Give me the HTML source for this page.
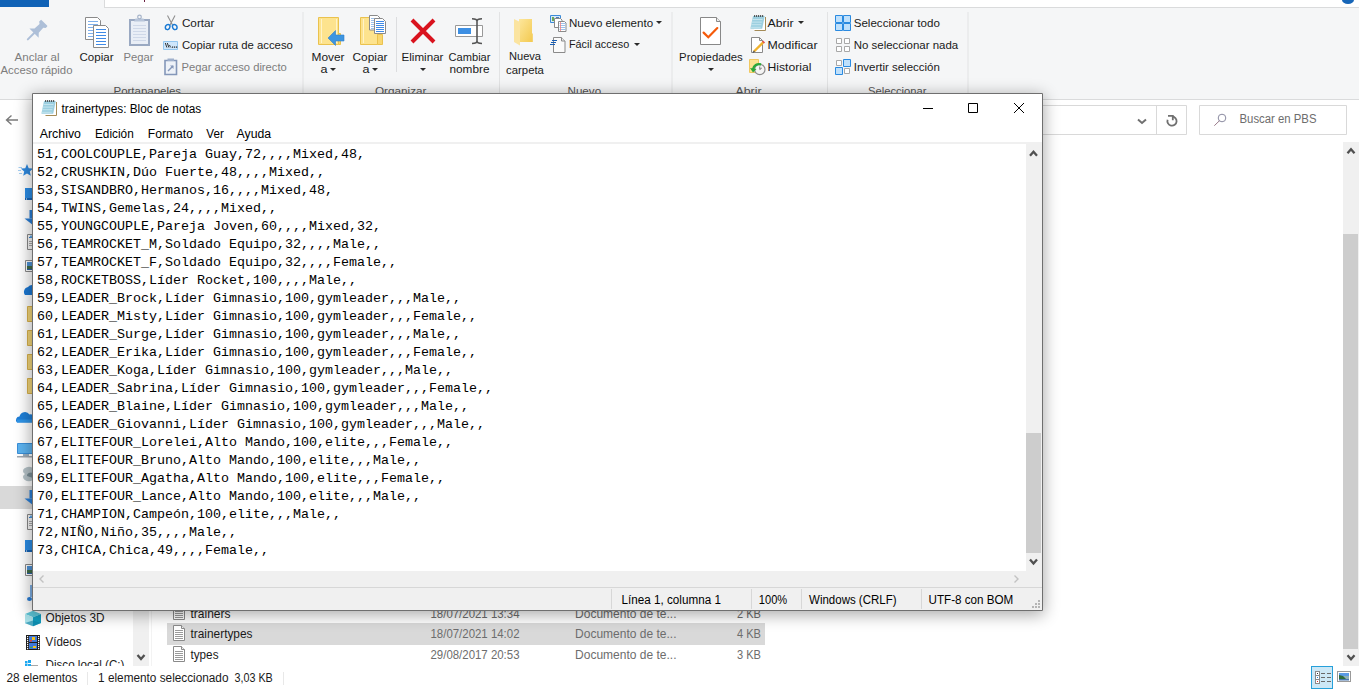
<!DOCTYPE html><html><head><meta charset="utf-8"><style>html,body{margin:0;padding:0;overflow:hidden;background:#fff}</style></head><body><svg width="1359" height="689" viewBox="0 0 1359 689" style="display:block">
<defs><filter id="sh" x="-20%" y="-20%" width="140%" height="140%"><feGaussianBlur stdDeviation="8"/></filter></defs>
<rect x="0" y="0" width="1359" height="689" fill="#ffffff" />
<rect x="0" y="0" width="1359" height="100" fill="#f5f6f7" />
<rect x="0" y="0" width="49" height="7" fill="#1062b6" />
<rect x="104" y="0" width="1255" height="7" fill="#ffffff" />
<line x1="104.5" y1="0" x2="104.5" y2="7.5" stroke="#dadbdc" stroke-width="1" />
<line x1="104" y1="7.5" x2="1359" y2="7.5" stroke="#dadbdc" stroke-width="1" />
<rect x="144" y="0" width="1" height="2" fill="#6a2040" />
<path d="M1342 0 A6 4 0 0 0 1354 0 Z" fill="#1766b8" stroke="none" stroke-width="1" />
<line x1="0" y1="99.5" x2="1359" y2="99.5" stroke="#dadbdc" stroke-width="1" />
<line x1="303" y1="12" x2="303" y2="96" stroke="#e2e3e4" stroke-width="1" />
<line x1="499.5" y1="12" x2="499.5" y2="96" stroke="#e2e3e4" stroke-width="1" />
<line x1="672" y1="12" x2="672" y2="96" stroke="#e2e3e4" stroke-width="1" />
<line x1="827.5" y1="12" x2="827.5" y2="96" stroke="#e2e3e4" stroke-width="1" />
<line x1="968" y1="12" x2="968" y2="96" stroke="#e2e3e4" stroke-width="1" />
<g transform="translate(35.6 31.6) rotate(45)" fill="#adbfd8"><rect x="-1" y="1" width="2" height="11" rx="1"/><path d="M-6.5 2.2 L6.5 2.2 L3 -1.5 L2.6 -8.2 L4.6 -9.6 L4.6 -11.6 Q4.6 -12.4 3.8 -12.4 L-3.8 -12.4 Q-4.6 -12.4 -4.6 -11.6 L-4.6 -9.6 L-2.6 -8.2 L-3 -1.5 Z"/></g>
<text x="14.5" y="60.7" font-family="Liberation Sans" font-size="11" fill="#7d7d7d" textLength="45.0" lengthAdjust="spacingAndGlyphs" >Anclar al</text>
<text x="0.5" y="73.6" font-family="Liberation Sans" font-size="11" fill="#7d7d7d" textLength="72.0" lengthAdjust="spacingAndGlyphs" >Acceso rápido</text>
<path d="M85.5 17.5 h12 l3 3 v19 h-15 z" fill="#fff" stroke="#8a8a8a" stroke-width="1" />
<line x1="88" y1="21.5" x2="98" y2="21.5" stroke="#7fb0ec" stroke-width="1" />
<line x1="88" y1="24.5" x2="98" y2="24.5" stroke="#7fb0ec" stroke-width="1" />
<line x1="88" y1="27.5" x2="98" y2="27.5" stroke="#7fb0ec" stroke-width="1" />
<line x1="88" y1="30.5" x2="98" y2="30.5" stroke="#7fb0ec" stroke-width="1" />
<line x1="88" y1="33.5" x2="98" y2="33.5" stroke="#7fb0ec" stroke-width="1" />
<line x1="88" y1="36.5" x2="98" y2="36.5" stroke="#7fb0ec" stroke-width="1" />
<path d="M93.5 25.5 h12 l3 3 v19 h-15 z" fill="#fff" stroke="#8a8a8a" stroke-width="1" />
<line x1="96" y1="29.5" x2="106" y2="29.5" stroke="#3f8ae6" stroke-width="1" />
<line x1="96" y1="32.5" x2="106" y2="32.5" stroke="#3f8ae6" stroke-width="1" />
<line x1="96" y1="35.5" x2="106" y2="35.5" stroke="#3f8ae6" stroke-width="1" />
<line x1="96" y1="38.5" x2="106" y2="38.5" stroke="#3f8ae6" stroke-width="1" />
<line x1="96" y1="41.5" x2="106" y2="41.5" stroke="#3f8ae6" stroke-width="1" />
<line x1="96" y1="44.5" x2="106" y2="44.5" stroke="#3f8ae6" stroke-width="1" />
<text x="79.5" y="60.7" font-family="Liberation Sans" font-size="11" fill="#1a1a1a" textLength="34.0" lengthAdjust="spacingAndGlyphs" >Copiar</text>
<path d="M130 20 h19 v25 h-19 z" fill="#e9eef6" stroke="#9aa9c2" stroke-width="2" />
<path d="M134 21.5 h11 l-1.5 -3 h-8 z" fill="#b8c5da" stroke="none" stroke-width="1" />
<circle cx="139.5" cy="17" r="1.8" fill="none" stroke="#a5b3c9" stroke-width="1.2"/>
<line x1="133" y1="25.5" x2="146" y2="25.5" stroke="#cfd8e8" stroke-width="1" />
<line x1="133" y1="28.5" x2="146" y2="28.5" stroke="#cfd8e8" stroke-width="1" />
<line x1="133" y1="31.5" x2="146" y2="31.5" stroke="#cfd8e8" stroke-width="1" />
<line x1="133" y1="34.5" x2="146" y2="34.5" stroke="#cfd8e8" stroke-width="1" />
<line x1="133" y1="37.5" x2="146" y2="37.5" stroke="#cfd8e8" stroke-width="1" />
<line x1="133" y1="40.5" x2="146" y2="40.5" stroke="#cfd8e8" stroke-width="1" />
<text x="123.5" y="60.7" font-family="Liberation Sans" font-size="11" fill="#7d7d7d" textLength="30.0" lengthAdjust="spacingAndGlyphs" >Pegar</text>
<path d="M167.5 15.5 L172.5 25 M175 15.5 L170 25" fill="none" stroke="#8f8f8f" stroke-width="1.1" />
<path d="M169.8 25.2 C168 23.5 165 25 165.3 27.8 C165.6 30.2 168.8 30.2 169.6 28 C170 27 170.2 26 169.8 25.2 Z" fill="none" stroke="#1a7ad4" stroke-width="1.5" />
<path d="M172.6 25.2 C174.4 23.5 177.4 25 177.1 27.8 C176.8 30.2 173.6 30.2 172.8 28 C172.4 27 172.2 26 172.6 25.2 Z" fill="none" stroke="#1a7ad4" stroke-width="1.5" />
<text x="181.9" y="27.1" font-family="Liberation Sans" font-size="11" fill="#1a1a1a" textLength="32.6" lengthAdjust="spacingAndGlyphs" >Cortar</text>
<path d="M163.5 41.5 h14 v8 h-14 z" fill="#cfe6fb" stroke="#93c6f0" stroke-width="1" />
<path d="M165.3 43 l1.6 4.5 M167.3 43 l1.6 4.5" fill="none" stroke="#222" stroke-width="0.9" />
<path d="M169.5 45 q1 2.5 1.5 2.5" fill="none" stroke="#222" stroke-width="0.9" />
<rect x="172" y="46.5" width="1.2" height="1.2" fill="#222" />
<rect x="174" y="46.5" width="1.2" height="1.2" fill="#222" />
<rect x="176" y="46.5" width="1.2" height="1.2" fill="#222" />
<text x="181.9" y="49.2" font-family="Liberation Sans" font-size="11" fill="#1a1a1a" textLength="111.0" lengthAdjust="spacingAndGlyphs" >Copiar ruta de acceso</text>
<path d="M165 60.5 h11.5 v14 h-11.5 z" fill="#eef2f8" stroke="#8497b9" stroke-width="1.6" />
<rect x="167.5" y="58.5" width="6.5" height="2.5" fill="#9fb0cc" />
<path d="M168 71 l5 -5" fill="none" stroke="#8497b9" stroke-width="1.4" />
<path d="M170 65.5 h3.5 v3.5 z" fill="#8497b9" stroke="none" stroke-width="1" />
<text x="181.5" y="70.7" font-family="Liberation Sans" font-size="11" fill="#7d7d7d" textLength="105.3" lengthAdjust="spacingAndGlyphs" >Pegar acceso directo</text>
<text x="113.5" y="94.5" font-family="Liberation Sans" font-size="11" fill="#555" textLength="67.6" lengthAdjust="spacingAndGlyphs" >Portapapeles</text>
<path d="M318.5 17.5 h20 v27 h-20 z" fill="#fde38e" stroke="#eac24e" stroke-width="1" />
<line x1="321.5" y1="19" x2="321.5" y2="43" stroke="#fff3c8" stroke-width="1" />
<line x1="336.5" y1="19" x2="336.5" y2="43" stroke="#fff3c8" stroke-width="1" />
<path d="M338.5 33.5 h2 v11 h-2 z" fill="#f9d771" stroke="#eac24e" stroke-width="1" />
<path d="M328 38 l7.5 -7.5 v4.5 h8.5 v6 h-8.5 v4.5 z" fill="#3d95e0" stroke="#2f7fcc" stroke-width="0.6" />
<text x="311.5" y="60.8" font-family="Liberation Sans" font-size="11" fill="#1a1a1a" textLength="33.0" lengthAdjust="spacingAndGlyphs" >Mover</text>
<text x="320.5" y="73" font-family="Liberation Sans" font-size="11" fill="#1a1a1a" textLength="7.0" lengthAdjust="spacingAndGlyphs" >a</text>
<path d="M330 68 h6 l-3.0 3.0 z" fill="#2a2a2a" stroke="none" stroke-width="1" />
<path d="M360.5 17.5 h17 v27 h-17 z" fill="#fde38e" stroke="#eac24e" stroke-width="1" />
<line x1="363.5" y1="19" x2="363.5" y2="43" stroke="#fff3c8" stroke-width="1" />
<path d="M377.5 34.5 h5 v10 h-5 z" fill="#f9d771" stroke="#eac24e" stroke-width="1" />
<path d="M369.5 15.5 h8 l2.5 2.5 v12 h-10.5 z" fill="#fff" stroke="#8a8a8a" stroke-width="1" />
<line x1="371" y1="18.5" x2="375" y2="18.5" stroke="#9cc0ea" stroke-width="1" />
<line x1="371" y1="20.5" x2="375" y2="20.5" stroke="#9cc0ea" stroke-width="1" />
<line x1="371" y1="22.5" x2="375" y2="22.5" stroke="#9cc0ea" stroke-width="1" />
<line x1="371" y1="24.5" x2="375" y2="24.5" stroke="#9cc0ea" stroke-width="1" />
<line x1="371" y1="26.5" x2="375" y2="26.5" stroke="#9cc0ea" stroke-width="1" />
<line x1="371" y1="28.5" x2="375" y2="28.5" stroke="#9cc0ea" stroke-width="1" />
<path d="M374.5 18.5 h8 l3 3 v12 h-11 z" fill="#fff" stroke="#8a8a8a" stroke-width="1" />
<line x1="376" y1="21.5" x2="384" y2="21.5" stroke="#3f8ae6" stroke-width="1" />
<line x1="376" y1="23.5" x2="384" y2="23.5" stroke="#3f8ae6" stroke-width="1" />
<line x1="376" y1="25.5" x2="384" y2="25.5" stroke="#3f8ae6" stroke-width="1" />
<line x1="376" y1="27.5" x2="384" y2="27.5" stroke="#3f8ae6" stroke-width="1" />
<line x1="376" y1="29.5" x2="384" y2="29.5" stroke="#3f8ae6" stroke-width="1" />
<line x1="376" y1="31.5" x2="384" y2="31.5" stroke="#3f8ae6" stroke-width="1" />
<text x="352.5" y="60.8" font-family="Liberation Sans" font-size="11" fill="#1a1a1a" textLength="35.0" lengthAdjust="spacingAndGlyphs" >Copiar</text>
<text x="362.5" y="73" font-family="Liberation Sans" font-size="11" fill="#1a1a1a" textLength="7.0" lengthAdjust="spacingAndGlyphs" >a</text>
<path d="M372 68 h6 l-3.0 3.0 z" fill="#2a2a2a" stroke="none" stroke-width="1" />
<line x1="396.5" y1="17" x2="396.5" y2="72" stroke="#dcdddf" stroke-width="1" />
<path d="M412 20 L434 42 M434 20 L412 42" fill="none" stroke="#d9131e" stroke-width="4" />
<text x="401.5" y="60.8" font-family="Liberation Sans" font-size="11" fill="#1a1a1a" textLength="42.0" lengthAdjust="spacingAndGlyphs" >Eliminar</text>
<path d="M420 68 h6 l-3.0 3.0 z" fill="#2a2a2a" stroke="none" stroke-width="1" />
<path d="M455.5 25.5 h27 v11 h-27 z" fill="#fff" stroke="#999" stroke-width="1" />
<rect x="458" y="28" width="13" height="6" fill="#3d8fe3" />
<path d="M472 18.8 q5 0 5 2.5 q0 -2.5 5 -2.5 M477 21 v20.5 M472 43.5 q5 0 5 -2.5 q0 2.5 5 2.5" fill="none" stroke="#555" stroke-width="1.6" />
<text x="448.5" y="60.8" font-family="Liberation Sans" font-size="11" fill="#1a1a1a" textLength="42.0" lengthAdjust="spacingAndGlyphs" >Cambiar</text>
<text x="449.5" y="73" font-family="Liberation Sans" font-size="11" fill="#1a1a1a" textLength="40.0" lengthAdjust="spacingAndGlyphs" >nombre</text>
<text x="375.0" y="94.5" font-family="Liberation Sans" font-size="11" fill="#555" textLength="51.5" lengthAdjust="spacingAndGlyphs" >Organizar</text>
<defs><linearGradient id="fg" x1="0" y1="0" x2="1" y2="1"><stop offset="0" stop-color="#fde79c"/><stop offset="1" stop-color="#f3c94f"/></linearGradient></defs>
<path d="M519 19 h13 v14 l0.8 1 v8 h-13.8 z" fill="url(#fg)" stroke="none" stroke-width="1" />
<path d="M514 19 l6 3 v23.5 l-6 -3.5 z" fill="#fbe4a0" stroke="none" stroke-width="1" />
<text x="509.0" y="60.3" font-family="Liberation Sans" font-size="11" fill="#1a1a1a" textLength="32.0" lengthAdjust="spacingAndGlyphs" >Nueva</text>
<text x="506.1" y="73.6" font-family="Liberation Sans" font-size="11" fill="#1a1a1a" textLength="37.8" lengthAdjust="spacingAndGlyphs" >carpeta</text>
<path d="M550.5 15.5 h10 v7 h-10 z" fill="#d6e9f8" stroke="#3a8ad8" stroke-width="1" />
<rect x="552" y="17" width="2" height="4" fill="#6aa85a" />
<rect x="556" y="17" width="3" height="2" fill="#4a7ab8" />
<path d="M554.5 18.5 h6 l1.5 1.5 v7.5 h-7.5 z" fill="#fff" stroke="#8a8a8a" stroke-width="1" />
<path d="M558.5 21.5 h6 l1.5 1.5 v8.5 h-7.5 z" fill="#fff" stroke="#8a8a8a" stroke-width="1" />
<line x1="559.5" y1="23.5" x2="565.5" y2="23.5" stroke="#9cc0ea" stroke-width="1" />
<line x1="559.5" y1="25.5" x2="565.5" y2="25.5" stroke="#9cc0ea" stroke-width="1" />
<line x1="559.5" y1="27.5" x2="565.5" y2="27.5" stroke="#9cc0ea" stroke-width="1" />
<line x1="559.5" y1="29.5" x2="565.5" y2="29.5" stroke="#9cc0ea" stroke-width="1" />
<line x1="560.5" y1="22" x2="560.5" y2="31" stroke="#f08080" stroke-width="0.8" />
<text x="568.9" y="26.5" font-family="Liberation Sans" font-size="11" fill="#1a1a1a" textLength="84.2" lengthAdjust="spacingAndGlyphs" >Nuevo elemento</text>
<path d="M656 21 h6 l-3.0 3.0 z" fill="#2a2a2a" stroke="none" stroke-width="1" />
<path d="M553.5 37.5 h8 l3.5 3.5 v11.5 h-11.5 z" fill="#fafafa" stroke="#8a8a8a" stroke-width="1" />
<path d="M561.5 37.5 v3.5 h3.5" fill="#e8e8e8" stroke="#8a8a8a" stroke-width="1" />
<path d="M552 40.5 h5 M551 42.5 h5 M550 44.5 h5" fill="none" stroke="#1a5fb4" stroke-width="1" />
<text x="568.9" y="48.4" font-family="Liberation Sans" font-size="11" fill="#1a1a1a" textLength="60.3" lengthAdjust="spacingAndGlyphs" >Fácil acceso</text>
<path d="M634 43 h6 l-3.0 3.0 z" fill="#2a2a2a" stroke="none" stroke-width="1" />
<text x="567.5" y="94.5" font-family="Liberation Sans" font-size="11" fill="#555" textLength="33.6" lengthAdjust="spacingAndGlyphs" >Nuevo</text>
<path d="M700.5 17.5 h16 l4 4 v23 h-20 z" fill="#fff" stroke="#888" stroke-width="1" />
<path d="M716.5 17.5 v4 h4" fill="#eeeeee" stroke="#888" stroke-width="1" />
<path d="M703.6 32.6 l4.7 4.7 l9 -9.2" fill="none" stroke="#f55a0a" stroke-width="2.2" stroke-linecap="round"/>
<text x="679.1" y="60.9" font-family="Liberation Sans" font-size="11" fill="#1a1a1a" textLength="63.7" lengthAdjust="spacingAndGlyphs" >Propiedades</text>
<path d="M708 68 h6 l-3.0 3.0 z" fill="#2a2a2a" stroke="none" stroke-width="1" />
<path d="M754 16 h11 v15 h-11 z" fill="#ffffff" stroke="none" stroke-width="1" />
<path d="M765.5 17 v13.5 h-11" fill="none" stroke="#a48b57" stroke-width="1" />
<path d="M753 16 h11.8 l-2.6 12.8 h-11.8 z" fill="#9ccfe0" stroke="none" stroke-width="1" />
<line x1="752.5" y1="19.5" x2="762.5" y2="19.5" stroke="#c4e4ee" stroke-width="1" />
<line x1="751.9" y1="22.1" x2="761.9" y2="22.1" stroke="#c4e4ee" stroke-width="1" />
<line x1="751.3" y1="24.7" x2="761.3" y2="24.7" stroke="#c4e4ee" stroke-width="1" />
<line x1="750.7" y1="27.3" x2="760.7" y2="27.3" stroke="#c4e4ee" stroke-width="1" />
<rect x="754" y="15.2" width="1.2" height="1.6" fill="#3a3a3a" />
<rect x="756" y="15.2" width="1.2" height="1.6" fill="#3a3a3a" />
<rect x="758" y="15.2" width="1.2" height="1.6" fill="#3a3a3a" />
<rect x="760" y="15.2" width="1.2" height="1.6" fill="#3a3a3a" />
<rect x="762" y="15.2" width="1.2" height="1.6" fill="#3a3a3a" />
<text x="767.5" y="27" font-family="Liberation Sans" font-size="11" fill="#1a1a1a" textLength="26.0" lengthAdjust="spacingAndGlyphs" >Abrir</text>
<path d="M798 21 h6 l-3.0 3.0 z" fill="#2a2a2a" stroke="none" stroke-width="1" />
<path d="M751.5 37.5 h8 l3 3 v12 h-11 z" fill="#fff" stroke="#8a8a8a" stroke-width="1" />
<path d="M759.5 37.5 v3 h3" fill="none" stroke="#8a8a8a" stroke-width="1" />
<path d="M754 51.5 L763.5 42" fill="none" stroke="#f0b22e" stroke-width="2.4" />
<path d="M762.5 41 l2 2" fill="none" stroke="#e05050" stroke-width="1.6" />
<path d="M753 52.5 l1.5 -1.5" fill="none" stroke="#555" stroke-width="1.2" />
<text x="767.5" y="49" font-family="Liberation Sans" font-size="11" fill="#1a1a1a" textLength="50.0" lengthAdjust="spacingAndGlyphs" >Modificar</text>
<path d="M749.5 59.5 h9 v13 h-9 z" fill="#fbe290" stroke="#f0c860" stroke-width="1" />
<circle cx="759.8" cy="69.5" r="5.2" fill="#f4f4f4" stroke="#8c8c8c" stroke-width="1.2"/>
<path d="M759.8 66.5 v3 l2 -1.5" fill="none" stroke="#555" stroke-width="0.8" />
<path d="M761 64.5 a6 6 0 0 0 -8 5" fill="none" stroke="#2aa83a" stroke-width="2.4" />
<path d="M750 68 l3 4.5 l3.5 -3.5 z" fill="#2aa83a" stroke="none" stroke-width="1" />
<text x="767.5" y="71" font-family="Liberation Sans" font-size="11" fill="#1a1a1a" textLength="44.0" lengthAdjust="spacingAndGlyphs" >Historial</text>
<text x="735.5" y="94.5" font-family="Liberation Sans" font-size="11" fill="#555" textLength="26.0" lengthAdjust="spacingAndGlyphs" >Abrir</text>
<path d="M835.5 15.5 h7 v7 h-7 z" fill="#bfe0fb" stroke="#2a8ae0" stroke-width="1" />
<path d="M843.5 15.5 h7 v7 h-7 z" fill="#bfe0fb" stroke="#2a8ae0" stroke-width="1" />
<path d="M835.5 23.5 h7 v7 h-7 z" fill="#bfe0fb" stroke="#2a8ae0" stroke-width="1" />
<path d="M843.5 23.5 h7 v7 h-7 z" fill="#bfe0fb" stroke="#2a8ae0" stroke-width="1" />
<path d="M836.5 38.5 h5 v5 h-5 z" fill="#fff" stroke="#a8a8a8" stroke-width="1" />
<path d="M844.5 38.5 h5 v5 h-5 z" fill="#fff" stroke="#a8a8a8" stroke-width="1" />
<path d="M836.5 46.5 h5 v5 h-5 z" fill="#fff" stroke="#a8a8a8" stroke-width="1" />
<path d="M844.5 46.5 h5 v5 h-5 z" fill="#fff" stroke="#a8a8a8" stroke-width="1" />
<path d="M836.5 60.5 h5 v5 h-5 z" fill="#fff" stroke="#a8a8a8" stroke-width="1" />
<path d="M843.5 59.5 h7 v7 h-7 z" fill="#bfe0fb" stroke="#2a8ae0" stroke-width="1" />
<path d="M835.5 67.5 h7 v7 h-7 z" fill="#bfe0fb" stroke="#2a8ae0" stroke-width="1" />
<path d="M844.5 68.5 h5 v5 h-5 z" fill="#fff" stroke="#a8a8a8" stroke-width="1" />
<text x="853.7" y="27" font-family="Liberation Sans" font-size="11" fill="#1a1a1a" textLength="86.2" lengthAdjust="spacingAndGlyphs" >Seleccionar todo</text>
<text x="853.7" y="49" font-family="Liberation Sans" font-size="11" fill="#1a1a1a" textLength="104.5" lengthAdjust="spacingAndGlyphs" >No seleccionar nada</text>
<text x="853.7" y="70.8" font-family="Liberation Sans" font-size="11" fill="#1a1a1a" textLength="86.2" lengthAdjust="spacingAndGlyphs" >Invertir selección</text>
<text x="868.0" y="94.5" font-family="Liberation Sans" font-size="11" fill="#555" textLength="58.5" lengthAdjust="spacingAndGlyphs" >Seleccionar</text>
<path d="M7 120 h11 M11.5 115.5 l-5 4.5 l5 4.5" fill="none" stroke="#7a7a7a" stroke-width="1.4" />
<path d="M40.5 105.5 h1146 v29 h-1146 z" fill="#fff" stroke="#d9d9d9" stroke-width="1" />
<line x1="1156.5" y1="105" x2="1156.5" y2="135" stroke="#d9d9d9" stroke-width="1" />
<path d="M1138 119.5 l4 3.5 l4 -3.5" fill="none" stroke="#707070" stroke-width="2" />
<path d="M1199.5 105.5 h147 v29 h-147 z" fill="#fff" stroke="#d9d9d9" stroke-width="1" />
<circle cx="1222" cy="118" r="3.8" fill="none" stroke="#8a8aa0" stroke-width="1"/>
<line x1="1219.5" y1="120.7" x2="1214.3" y2="125.7" stroke="#9a7a8a" stroke-width="1" />
<path d="M1172 116.5 a4.6 4.6 0 1 1 -4.4 3.2" fill="none" stroke="#707070" stroke-width="1.8" />
<path d="M1168 115.8 h4.8 v4.5" fill="none" stroke="#707070" stroke-width="1.8" />
<text x="1239.5" y="123.2" font-family="Liberation Sans" font-size="12" fill="#6d6d6d" textLength="77.0" lengthAdjust="spacingAndGlyphs" >Buscar en PBS</text>
<rect x="0" y="486" width="150" height="23" fill="#d9d9d9" />
<path d="M27.00 164.00 L28.72 168.13 L33.18 168.49 L29.78 171.40 L30.82 175.76 L27.00 173.43 L23.18 175.76 L24.22 171.40 L20.82 168.49 L25.28 168.13 Z" fill="#2f8ae0" stroke="none" stroke-width="1" />
<path d="M18.5 167.5 h3.5 M18 170.5 h3 M19 173.5 h3" fill="none" stroke="#8cc0ee" stroke-width="0.8" />
<rect x="25" y="188" width="8" height="12" fill="#2b8de6" />
<rect x="25" y="198" width="8" height="2" fill="#1565b8" />
<rect x="26" y="198.5" width="1" height="1" fill="#fff" />
<path d="M29.5 210 h4 v8.5 h-4 z" fill="#2a7fd8" stroke="none" stroke-width="1" />
<path d="M24.5 218.5 h9 v7 z" fill="#2a7fd8" stroke="none" stroke-width="1" />
<path d="M27.5 234.5 h6 v15 h-6 z" fill="#fafafa" stroke="#8a8a8a" stroke-width="1" />
<rect x="29" y="237" width="4" height="1" fill="#2a7fd8" />
<rect x="30" y="235.5" width="2" height="2" fill="#6ab0ee" />
<rect x="29" y="241" width="4" height="1" fill="#aaa" />
<rect x="29" y="243" width="4" height="1" fill="#aaa" />
<rect x="29" y="245" width="4" height="1" fill="#aaa" />
<path d="M25.5 260.5 h8 v11 h-8 z" fill="#fff" stroke="#8a8a8a" stroke-width="1" />
<rect x="27" y="262" width="6" height="4" fill="#4f93d6" />
<rect x="27" y="266" width="6" height="3" fill="#3f6e4a" />
<rect x="27" y="269" width="6" height="1" fill="#2d5fa6" />
<path d="M25 295 a5 5 0 0 1 3 -8 a5 5 0 0 1 5 -2 v10 z" fill="#1b78d4" stroke="none" stroke-width="1" />
<path d="M27.5 306.5 h6 v15 h-6 z" fill="#f3d67a" stroke="#d9b24c" stroke-width="1" />
<path d="M27.5 330.5 h6 v15 h-6 z" fill="#f3d67a" stroke="#d9b24c" stroke-width="1" />
<path d="M27.5 354.5 h6 v15 h-6 z" fill="#f3d67a" stroke="#d9b24c" stroke-width="1" />
<path d="M27.5 378.5 h6 v15 h-6 z" fill="#f3d67a" stroke="#d9b24c" stroke-width="1" />
<path d="M17 422.5 a3.5 3.5 0 0 1 2.5 -6 a5.5 5.5 0 0 1 10 -2 a3 3 0 0 1 3.5 1 v7 z" fill="#1e7fd8" stroke="none" stroke-width="1" />
<path d="M17 422.5 h16 v-3 h-16 z" fill="#2f95e8" stroke="none" stroke-width="1" />
<path d="M17.5 443.5 h16 v10 h-16 z" fill="#5cb3f0" stroke="#3a8fd8" stroke-width="1" />
<rect x="23" y="454" width="6" height="2" fill="#9bb0c0" />
<rect x="17" y="456" width="16" height="1.5" fill="#a0a8b0" />
<path d="M25 474 a6 4 0 0 1 8 -6 v12 a6 4 0 0 1 -8 -6 z" fill="#b6c3c8" stroke="none" stroke-width="1" />
<path d="M27 476 a4 3 0 0 1 6 -3 v5 z" fill="#7a8e96" stroke="none" stroke-width="1" />
<path d="M29.5 490 h4 v8.5 h-4 z" fill="#2a7fd8" stroke="none" stroke-width="1" />
<path d="M24.5 498.5 h9 v7 z" fill="#2a7fd8" stroke="none" stroke-width="1" />
<path d="M27.5 514.5 h6 v15 h-6 z" fill="#fafafa" stroke="#8a8a8a" stroke-width="1" />
<rect x="29" y="517" width="4" height="1" fill="#2a7fd8" />
<rect x="30" y="515.5" width="2" height="2" fill="#6ab0ee" />
<rect x="29" y="521" width="4" height="1" fill="#aaa" />
<rect x="29" y="523" width="4" height="1" fill="#aaa" />
<rect x="29" y="525" width="4" height="1" fill="#aaa" />
<rect x="25" y="540" width="8" height="12" fill="#2b8de6" />
<rect x="25" y="550" width="8" height="2" fill="#1565b8" />
<rect x="26" y="550.5" width="1" height="1" fill="#fff" />
<path d="M25.5 564.5 h8 v11 h-8 z" fill="#fff" stroke="#8a8a8a" stroke-width="1" />
<rect x="27" y="566" width="6" height="4" fill="#4f93d6" />
<rect x="27" y="570" width="6" height="3" fill="#3f6e4a" />
<rect x="27" y="573" width="6" height="1" fill="#2d5fa6" />
<path d="M31 585 v12" fill="none" stroke="#2a7fd8" stroke-width="1.2" />
<path d="M27 599 a2.5 2 0 1 0 5 0 a2.5 2 0 1 0 -5 0" fill="#2a7fd8" stroke="none" stroke-width="1" />
<path d="M25 614 l8 -3.2 l8 3.2 l-8 3.2 z" fill="#5cc6d8" stroke="none" stroke-width="1" />
<path d="M25 614 l8 3.2 v9 l-8 -3 z" fill="#a9e2ea" stroke="none" stroke-width="1" />
<path d="M33 617.2 l8 -3.2 v9 l-8 3.2 z" fill="#119ec0" stroke="none" stroke-width="1" />
<path d="M25 623 l8 -2.5 l8 2.5 l-8 3.2 z" fill="#0d86a8" stroke="none" stroke-width="1" opacity="0.6"/>
<text x="45.5" y="622" font-family="Liberation Sans" font-size="12" fill="#1a1a1a" textLength="59.0" lengthAdjust="spacingAndGlyphs" >Objetos 3D</text>
<rect x="26" y="635" width="14" height="15" fill="#1e1e1e" />
<rect x="27" y="636" width="1.2" height="1.2" fill="#fff" />
<rect x="38" y="636" width="1.2" height="1.2" fill="#fff" />
<rect x="27" y="638" width="1.2" height="1.2" fill="#fff" />
<rect x="38" y="638" width="1.2" height="1.2" fill="#fff" />
<rect x="27" y="640" width="1.2" height="1.2" fill="#fff" />
<rect x="38" y="640" width="1.2" height="1.2" fill="#fff" />
<rect x="27" y="642" width="1.2" height="1.2" fill="#fff" />
<rect x="38" y="642" width="1.2" height="1.2" fill="#fff" />
<rect x="27" y="644" width="1.2" height="1.2" fill="#fff" />
<rect x="38" y="644" width="1.2" height="1.2" fill="#fff" />
<rect x="27" y="646" width="1.2" height="1.2" fill="#fff" />
<rect x="38" y="646" width="1.2" height="1.2" fill="#fff" />
<rect x="27" y="648" width="1.2" height="1.2" fill="#fff" />
<rect x="38" y="648" width="1.2" height="1.2" fill="#fff" />
<rect x="29" y="636" width="8" height="6" fill="#3f78d8" />
<rect x="29" y="643" width="8" height="6" fill="#3f78d8" />
<rect x="32" y="637" width="3" height="3" fill="#f0c020" />
<rect x="30" y="640" width="2" height="1.5" fill="#e04040" />
<rect x="33" y="646" width="3" height="2" fill="#f0c020" />
<rect x="30" y="647" width="2" height="1" fill="#40b040" />
<text x="45.5" y="645.5" font-family="Liberation Sans" font-size="12" fill="#1a1a1a" textLength="36.0" lengthAdjust="spacingAndGlyphs" >Vídeos</text>
<rect x="25" y="661" width="2.5" height="2.5" fill="#1ea8f0" />
<rect x="28" y="660" width="3" height="3" fill="#1ea8f0" />
<rect x="25" y="664" width="2.5" height="2" fill="#1ea8f0" />
<rect x="28" y="664" width="3" height="2" fill="#1ea8f0" />
<rect x="31" y="665" width="7" height="1" fill="#a8a8a8" />
<text x="45.5" y="669" font-family="Liberation Sans" font-size="12" fill="#1a1a1a" textLength="79.0" lengthAdjust="spacingAndGlyphs" >Disco local (C:)</text>
<rect x="133" y="140" width="16" height="526" fill="#f0f0f0" />
<path d="M137.5 655 l3.5 4 l3.5 -4" fill="none" stroke="#505050" stroke-width="2.3" />
<line x1="151.5" y1="140" x2="151.5" y2="666" stroke="#f3f3f3" stroke-width="1" />
<rect x="167" y="623" width="598" height="22" fill="#d9d9d9" />
<path d="M173.5 604.5 h8 l3 3 v12 h-11 z" fill="#fff" stroke="#8a8a8a" stroke-width="1" />
<path d="M181.5 604.5 v3 h3" fill="#eee" stroke="#8a8a8a" stroke-width="1" />
<line x1="175" y1="609.5" x2="183" y2="609.5" stroke="#9a9a9a" stroke-width="1" />
<line x1="175" y1="611.5" x2="183" y2="611.5" stroke="#9a9a9a" stroke-width="1" />
<line x1="175" y1="613.5" x2="183" y2="613.5" stroke="#9a9a9a" stroke-width="1" />
<line x1="175" y1="615.5" x2="183" y2="615.5" stroke="#9a9a9a" stroke-width="1" />
<line x1="175" y1="617.5" x2="183" y2="617.5" stroke="#9a9a9a" stroke-width="1" />
<text x="190.5" y="617.8" font-family="Liberation Sans" font-size="12" fill="#1a1a1a" textLength="40.0" lengthAdjust="spacingAndGlyphs" >trainers</text>
<text x="430.5" y="617.8" font-family="Liberation Sans" font-size="12" fill="#6d6d6d" textLength="89.0" lengthAdjust="spacingAndGlyphs" >18/07/2021 13:34</text>
<text x="575.1" y="617.8" font-family="Liberation Sans" font-size="12" fill="#6d6d6d" textLength="101.4" lengthAdjust="spacingAndGlyphs" >Documento de te...</text>
<text x="737.0" y="617.8" font-family="Liberation Sans" font-size="12" fill="#6d6d6d" textLength="24.0" lengthAdjust="spacingAndGlyphs" >2 KB</text>
<path d="M173.5 625.5 h8 l3 3 v12 h-11 z" fill="#fff" stroke="#8a8a8a" stroke-width="1" />
<path d="M181.5 625.5 v3 h3" fill="#eee" stroke="#8a8a8a" stroke-width="1" />
<line x1="175" y1="630.5" x2="183" y2="630.5" stroke="#9a9a9a" stroke-width="1" />
<line x1="175" y1="632.5" x2="183" y2="632.5" stroke="#9a9a9a" stroke-width="1" />
<line x1="175" y1="634.5" x2="183" y2="634.5" stroke="#9a9a9a" stroke-width="1" />
<line x1="175" y1="636.5" x2="183" y2="636.5" stroke="#9a9a9a" stroke-width="1" />
<line x1="175" y1="638.5" x2="183" y2="638.5" stroke="#9a9a9a" stroke-width="1" />
<text x="190.5" y="638.3" font-family="Liberation Sans" font-size="12" fill="#1a1a1a" textLength="62.0" lengthAdjust="spacingAndGlyphs" >trainertypes</text>
<text x="430.5" y="638.3" font-family="Liberation Sans" font-size="12" fill="#6d6d6d" textLength="89.0" lengthAdjust="spacingAndGlyphs" >18/07/2021 14:02</text>
<text x="575.1" y="638.3" font-family="Liberation Sans" font-size="12" fill="#6d6d6d" textLength="101.4" lengthAdjust="spacingAndGlyphs" >Documento de te...</text>
<text x="737.0" y="638.3" font-family="Liberation Sans" font-size="12" fill="#6d6d6d" textLength="24.0" lengthAdjust="spacingAndGlyphs" >4 KB</text>
<path d="M173.5 646.5 h8 l3 3 v12 h-11 z" fill="#fff" stroke="#8a8a8a" stroke-width="1" />
<path d="M181.5 646.5 v3 h3" fill="#eee" stroke="#8a8a8a" stroke-width="1" />
<line x1="175" y1="651.5" x2="183" y2="651.5" stroke="#9a9a9a" stroke-width="1" />
<line x1="175" y1="653.5" x2="183" y2="653.5" stroke="#9a9a9a" stroke-width="1" />
<line x1="175" y1="655.5" x2="183" y2="655.5" stroke="#9a9a9a" stroke-width="1" />
<line x1="175" y1="657.5" x2="183" y2="657.5" stroke="#9a9a9a" stroke-width="1" />
<line x1="175" y1="659.5" x2="183" y2="659.5" stroke="#9a9a9a" stroke-width="1" />
<text x="190.5" y="659.3" font-family="Liberation Sans" font-size="12" fill="#1a1a1a" textLength="28.0" lengthAdjust="spacingAndGlyphs" >types</text>
<text x="430.5" y="659.3" font-family="Liberation Sans" font-size="12" fill="#6d6d6d" textLength="89.0" lengthAdjust="spacingAndGlyphs" >29/08/2017 20:53</text>
<text x="575.1" y="659.3" font-family="Liberation Sans" font-size="12" fill="#6d6d6d" textLength="101.4" lengthAdjust="spacingAndGlyphs" >Documento de te...</text>
<text x="737.0" y="659.3" font-family="Liberation Sans" font-size="12" fill="#6d6d6d" textLength="24.0" lengthAdjust="spacingAndGlyphs" >3 KB</text>
<rect x="1343" y="142" width="16" height="524" fill="#f0f0f0" />
<rect x="1343" y="234" width="15" height="415" fill="#cdcdcd" />
<path d="M1347.5 153.3 l3.5 -4 l3.5 4" fill="none" stroke="#505050" stroke-width="2.3" />
<path d="M1347.5 655.3 l3.5 4 l3.5 -4" fill="none" stroke="#505050" stroke-width="2.3" />
<rect x="0" y="666" width="1359" height="23" fill="#ffffff" />
<text x="6.5" y="682.3" font-family="Liberation Sans" font-size="12" fill="#1a1a1a" textLength="71.0" lengthAdjust="spacingAndGlyphs" >28 elementos</text>
<line x1="87.5" y1="672" x2="87.5" y2="685" stroke="#e8e8e8" stroke-width="1" />
<text x="98.1" y="682.3" font-family="Liberation Sans" font-size="12" fill="#1a1a1a" textLength="130.4" lengthAdjust="spacingAndGlyphs" >1 elemento seleccionado</text>
<text x="234.5" y="682.3" font-family="Liberation Sans" font-size="12" fill="#1a1a1a" textLength="38.3" lengthAdjust="spacingAndGlyphs" >3,03 KB</text>
<line x1="283.5" y1="672" x2="283.5" y2="685" stroke="#e8e8e8" stroke-width="1" />
<rect x="1311.5" y="666.5" width="21" height="22" fill="#cde8f6" stroke="#26a0da"/>
<rect x="1315.5" y="671.5" width="4" height="4" fill="#fff" stroke="#8a8a8a" stroke-width="1"/>
<rect x="1317" y="673" width="1" height="1" fill="#333" />
<line x1="1321" y1="673.5" x2="1325" y2="673.5" stroke="#6a6a6a" stroke-width="1" />
<line x1="1327" y1="673.5" x2="1331" y2="673.5" stroke="#6a6a6a" stroke-width="1" />
<rect x="1315.5" y="675.5" width="4" height="4" fill="#fff" stroke="#8a8a8a" stroke-width="1"/>
<rect x="1317" y="677" width="1" height="1" fill="#2a7fd8" />
<line x1="1321" y1="677.5" x2="1325" y2="677.5" stroke="#6a6a6a" stroke-width="1" />
<line x1="1327" y1="677.5" x2="1331" y2="677.5" stroke="#6a6a6a" stroke-width="1" />
<rect x="1315.5" y="679.5" width="4" height="4" fill="#fff" stroke="#8a8a8a" stroke-width="1"/>
<rect x="1317" y="681" width="1" height="1" fill="#e03030" />
<line x1="1321" y1="681.5" x2="1325" y2="681.5" stroke="#6a6a6a" stroke-width="1" />
<line x1="1327" y1="681.5" x2="1331" y2="681.5" stroke="#6a6a6a" stroke-width="1" />
<rect x="1337.5" y="671.5" width="13" height="10" fill="#fff" stroke="#9a9a9a"/>
<rect x="1339" y="673" width="10" height="3" fill="#5a9ae6" />
<rect x="1339" y="676" width="10" height="3" fill="#8fb0b8" />
<path d="M1339 675 l4 1 l3 3 v1 h-7 z" fill="#2f6b3c" stroke="none" stroke-width="1" />
<rect x="1339" y="679" width="10" height="1.5" fill="#4a78b0" />
<rect x="30" y="95" width="1014" height="520" fill="#000" opacity="0.33" filter="url(#sh)"/>
<rect x="32" y="93" width="1011" height="518" fill="#ffffff" />
<path d="M45 101 h11 v15 h-11 z" fill="#ffffff" stroke="none" stroke-width="1" />
<path d="M56.5 102 v13.5 h-11" fill="none" stroke="#a48b57" stroke-width="1" />
<path d="M44 101 h11.8 l-2.6 12.8 h-11.8 z" fill="#9ccfe0" stroke="none" stroke-width="1" />
<line x1="43.5" y1="104.5" x2="53.5" y2="104.5" stroke="#c4e4ee" stroke-width="1" />
<line x1="42.9" y1="107.1" x2="52.9" y2="107.1" stroke="#c4e4ee" stroke-width="1" />
<line x1="42.3" y1="109.7" x2="52.3" y2="109.7" stroke="#c4e4ee" stroke-width="1" />
<line x1="41.7" y1="112.3" x2="51.7" y2="112.3" stroke="#c4e4ee" stroke-width="1" />
<rect x="45" y="100.2" width="1.2" height="1.6" fill="#3a3a3a" />
<rect x="47" y="100.2" width="1.2" height="1.6" fill="#3a3a3a" />
<rect x="49" y="100.2" width="1.2" height="1.6" fill="#3a3a3a" />
<rect x="51" y="100.2" width="1.2" height="1.6" fill="#3a3a3a" />
<rect x="53" y="100.2" width="1.2" height="1.6" fill="#3a3a3a" />
<text x="61.5" y="112.9" font-family="Liberation Sans" font-size="12" fill="#000" textLength="139.7" lengthAdjust="spacingAndGlyphs" >trainertypes: Bloc de notas</text>
<line x1="923" y1="108.5" x2="933" y2="108.5" stroke="#000" stroke-width="1" />
<path d="M968.5 103.5 h9 v9 h-9 z" fill="none" stroke="#000" stroke-width="1" />
<path d="M1014 103 L1024 113 M1024 103 L1014 113" fill="none" stroke="#000" stroke-width="1" />
<text x="39.8" y="137.7" font-family="Liberation Sans" font-size="12" fill="#000" textLength="41.1" lengthAdjust="spacingAndGlyphs" >Archivo</text>
<text x="95.0" y="137.7" font-family="Liberation Sans" font-size="12" fill="#000" textLength="38.7" lengthAdjust="spacingAndGlyphs" >Edición</text>
<text x="147.8" y="137.7" font-family="Liberation Sans" font-size="12" fill="#000" textLength="45.1" lengthAdjust="spacingAndGlyphs" >Formato</text>
<text x="206.3" y="137.7" font-family="Liberation Sans" font-size="12" fill="#000" textLength="17.5" lengthAdjust="spacingAndGlyphs" >Ver</text>
<text x="236.6" y="137.7" font-family="Liberation Sans" font-size="12" fill="#000" textLength="34.5" lengthAdjust="spacingAndGlyphs" >Ayuda</text>
<rect x="33" y="142" width="1009" height="2" fill="#f0f0f0" />
<text x="37" y="158" font-family="Liberation Mono" font-size="13.5" fill="#000" textLength="328" lengthAdjust="spacingAndGlyphs">51,COOLCOUPLE,Pareja Guay,72,,,,Mixed,48,</text>
<text x="37" y="176" font-family="Liberation Mono" font-size="13.5" fill="#000" textLength="288" lengthAdjust="spacingAndGlyphs">52,CRUSHKIN,Dúo Fuerte,48,,,,Mixed,,</text>
<text x="37" y="194" font-family="Liberation Mono" font-size="13.5" fill="#000" textLength="296" lengthAdjust="spacingAndGlyphs">53,SISANDBRO,Hermanos,16,,,,Mixed,48,</text>
<text x="37" y="212" font-family="Liberation Mono" font-size="13.5" fill="#000" textLength="240" lengthAdjust="spacingAndGlyphs">54,TWINS,Gemelas,24,,,,Mixed,,</text>
<text x="37" y="230" font-family="Liberation Mono" font-size="13.5" fill="#000" textLength="344" lengthAdjust="spacingAndGlyphs">55,YOUNGCOUPLE,Pareja Joven,60,,,,Mixed,32,</text>
<text x="37" y="248" font-family="Liberation Mono" font-size="13.5" fill="#000" textLength="344" lengthAdjust="spacingAndGlyphs">56,TEAMROCKET_M,Soldado Equipo,32,,,,Male,,</text>
<text x="37" y="266" font-family="Liberation Mono" font-size="13.5" fill="#000" textLength="360" lengthAdjust="spacingAndGlyphs">57,TEAMROCKET_F,Soldado Equipo,32,,,,Female,,</text>
<text x="37" y="284" font-family="Liberation Mono" font-size="13.5" fill="#000" textLength="320" lengthAdjust="spacingAndGlyphs">58,ROCKETBOSS,Líder Rocket,100,,,,Male,,</text>
<text x="37" y="302" font-family="Liberation Mono" font-size="13.5" fill="#000" textLength="424" lengthAdjust="spacingAndGlyphs">59,LEADER_Brock,Líder Gimnasio,100,gymleader,,,Male,,</text>
<text x="37" y="320" font-family="Liberation Mono" font-size="13.5" fill="#000" textLength="440" lengthAdjust="spacingAndGlyphs">60,LEADER_Misty,Líder Gimnasio,100,gymleader,,,Female,,</text>
<text x="37" y="338" font-family="Liberation Mono" font-size="13.5" fill="#000" textLength="424" lengthAdjust="spacingAndGlyphs">61,LEADER_Surge,Líder Gimnasio,100,gymleader,,,Male,,</text>
<text x="37" y="356" font-family="Liberation Mono" font-size="13.5" fill="#000" textLength="440" lengthAdjust="spacingAndGlyphs">62,LEADER_Erika,Líder Gimnasio,100,gymleader,,,Female,,</text>
<text x="37" y="374" font-family="Liberation Mono" font-size="13.5" fill="#000" textLength="416" lengthAdjust="spacingAndGlyphs">63,LEADER_Koga,Líder Gimnasio,100,gymleader,,,Male,,</text>
<text x="37" y="392" font-family="Liberation Mono" font-size="13.5" fill="#000" textLength="456" lengthAdjust="spacingAndGlyphs">64,LEADER_Sabrina,Líder Gimnasio,100,gymleader,,,Female,,</text>
<text x="37" y="410" font-family="Liberation Mono" font-size="13.5" fill="#000" textLength="432" lengthAdjust="spacingAndGlyphs">65,LEADER_Blaine,Líder Gimnasio,100,gymleader,,,Male,,</text>
<text x="37" y="428" font-family="Liberation Mono" font-size="13.5" fill="#000" textLength="448" lengthAdjust="spacingAndGlyphs">66,LEADER_Giovanni,Líder Gimnasio,100,gymleader,,,Male,,</text>
<text x="37" y="446" font-family="Liberation Mono" font-size="13.5" fill="#000" textLength="416" lengthAdjust="spacingAndGlyphs">67,ELITEFOUR_Lorelei,Alto Mando,100,elite,,,Female,,</text>
<text x="37" y="464" font-family="Liberation Mono" font-size="13.5" fill="#000" textLength="384" lengthAdjust="spacingAndGlyphs">68,ELITEFOUR_Bruno,Alto Mando,100,elite,,,Male,,</text>
<text x="37" y="482" font-family="Liberation Mono" font-size="13.5" fill="#000" textLength="408" lengthAdjust="spacingAndGlyphs">69,ELITEFOUR_Agatha,Alto Mando,100,elite,,,Female,,</text>
<text x="37" y="500" font-family="Liberation Mono" font-size="13.5" fill="#000" textLength="384" lengthAdjust="spacingAndGlyphs">70,ELITEFOUR_Lance,Alto Mando,100,elite,,,Male,,</text>
<text x="37" y="518" font-family="Liberation Mono" font-size="13.5" fill="#000" textLength="304" lengthAdjust="spacingAndGlyphs">71,CHAMPION,Campeón,100,elite,,,Male,,</text>
<text x="37" y="536" font-family="Liberation Mono" font-size="13.5" fill="#000" textLength="200" lengthAdjust="spacingAndGlyphs">72,NIÑO,Niño,35,,,,Male,,</text>
<text x="37" y="554" font-family="Liberation Mono" font-size="13.5" fill="#000" textLength="232" lengthAdjust="spacingAndGlyphs">73,CHICA,Chica,49,,,,Female,,</text>
<rect x="1026" y="144" width="16" height="427" fill="#f0f0f0" />
<rect x="1026" y="433" width="15" height="120" fill="#cdcdcd" />
<path d="M1030 155.8 l3.5 -4 l3.5 4" fill="none" stroke="#505050" stroke-width="2.3" />
<path d="M1030 559.5 l3.5 4 l3.5 -4" fill="none" stroke="#505050" stroke-width="2.3" />
<rect x="33" y="571" width="1009" height="16" fill="#f0f0f0" />
<path d="M43.5 575.5 l-3.5 3.5 l3.5 3.5" fill="none" stroke="#c2c2c2" stroke-width="1.4" />
<path d="M1014.5 575.5 l3.5 3.5 l-3.5 3.5" fill="none" stroke="#c2c2c2" stroke-width="1.4" />
<line x1="33" y1="587.5" x2="1042" y2="587.5" stroke="#d7d7d7" stroke-width="1" />
<rect x="33" y="588" width="1009" height="22" fill="#f0f0f0" />
<line x1="611.5" y1="589" x2="611.5" y2="609" stroke="#d7d7d7" stroke-width="1" />
<line x1="751.5" y1="589" x2="751.5" y2="609" stroke="#d7d7d7" stroke-width="1" />
<line x1="801.5" y1="589" x2="801.5" y2="609" stroke="#d7d7d7" stroke-width="1" />
<line x1="921.5" y1="589" x2="921.5" y2="609" stroke="#d7d7d7" stroke-width="1" />
<text x="621.5" y="603.8" font-family="Liberation Sans" font-size="12" fill="#000" textLength="99.4" lengthAdjust="spacingAndGlyphs" >Línea 1, columna 1</text>
<text x="758.8" y="603.8" font-family="Liberation Sans" font-size="12" fill="#000" textLength="28.4" lengthAdjust="spacingAndGlyphs" >100%</text>
<text x="809.1" y="603.8" font-family="Liberation Sans" font-size="12" fill="#000" textLength="87.4" lengthAdjust="spacingAndGlyphs" >Windows (CRLF)</text>
<text x="928.5" y="603.8" font-family="Liberation Sans" font-size="12" fill="#000" textLength="84.8" lengthAdjust="spacingAndGlyphs" >UTF-8 con BOM</text>
<rect x="1038" y="600" width="2" height="2" fill="#b5b5b5" />
<rect x="1035" y="603" width="2" height="2" fill="#b5b5b5" />
<rect x="1038" y="603" width="2" height="2" fill="#b5b5b5" />
<rect x="1032" y="606" width="2" height="2" fill="#b5b5b5" />
<rect x="1035" y="606" width="2" height="2" fill="#b5b5b5" />
<rect x="1038" y="606" width="2" height="2" fill="#b5b5b5" />
<path d="M32.5 93.5 h1010 v517 h-1010 z" fill="none" stroke="#6f6f6f" stroke-width="1" />
</svg></body></html>
